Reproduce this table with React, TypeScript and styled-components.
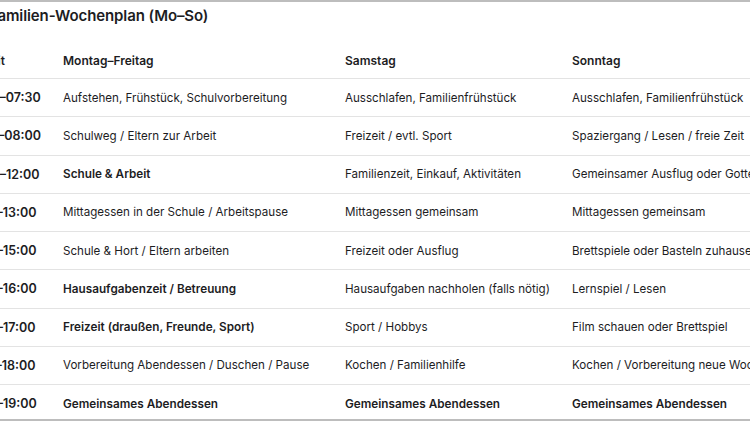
import styled, { createGlobalStyle } from "styled-components";

const GlobalStyle = createGlobalStyle`
  html, body {
    margin: 0;
    padding: 0;
    background: #ffffff;
    overflow: hidden;
  }
  body {
    font-family: Inter, "Noto Sans", "Liberation Sans", sans-serif;
    color: #1d1d1f;
    -webkit-font-smoothing: antialiased;
  }
`;

const Frame = styled.div`
  box-sizing: border-box;
  width: 750px;
  height: 421px;
  overflow: hidden;
  border-top: 2px solid #bdbdbd;
  border-bottom: 2px solid #bdbdbd;
`;

const Sheet = styled.section`
  width: 960px;
  margin-left: -49px;
`;

const Title = styled.h2`
  margin: 0;
  padding: 4px 0 0 38px;
  font-size: 15px;
  line-height: 20px;
  font-weight: 600;
  letter-spacing: -0.1px;
`;

const Table = styled.table`
  margin-top: 16px;
  width: 100%;
  border-collapse: collapse;
  table-layout: fixed;
`;

const Col = styled.col<{ $w: number }>`
  width: ${p => p.$w}px;
`;

const HeadCell = styled.th`
  height: 36px;
  padding: 0 12px;
  text-align: left;
  font-size: 12px;
  font-weight: 600;
  border-bottom: 1px solid #e3e3e3;
  white-space: nowrap;
  overflow: hidden;
`;

const Row = styled.tr`
  height: 38.25px;
  border-bottom: 1px solid #e3e3e3;
  &:last-child {
    border-bottom: none;
  }
`;

const Cell = styled.td<{ $bold?: boolean }>`
  padding: 0 12px;
  font-size: ${p => (p.$bold ? "11.75px" : "11.6px")};
  font-weight: ${p => (p.$bold ? 600 : 400)};
  white-space: nowrap;
  overflow: hidden;
`;

const TimeCell = styled.td`
  padding: 0 12px;
  font-size: 12.5px;
  font-weight: 600;
  white-space: nowrap;
  overflow: hidden;
`;

interface Slot {
  time: string;
  week: string;
  sat: string;
  sun: string;
  bold?: boolean;
  weekBold?: boolean;
}

const slots: Slot[] = [
  { time: "06:30–07:30", week: "Aufstehen, Frühstück, Schulvorbereitung", sat: "Ausschlafen, Familienfrühstück", sun: "Ausschlafen, Familienfrühstück" },
  { time: "07:30–08:00", week: "Schulweg / Eltern zur Arbeit", sat: "Freizeit / evtl. Sport", sun: "Spaziergang / Lesen / freie Zeit" },
  { time: "08:00–12:00", week: "Schule & Arbeit", weekBold: true, sat: "Familienzeit, Einkauf, Aktivitäten", sun: "Gemeinsamer Ausflug oder Gottesdienst" },
  { time: "12:00–13:00", week: "Mittagessen in der Schule / Arbeitspause", sat: "Mittagessen gemeinsam", sun: "Mittagessen gemeinsam" },
  { time: "13:00–15:00", week: "Schule & Hort / Eltern arbeiten", sat: "Freizeit oder Ausflug", sun: "Brettspiele oder Basteln zuhause" },
  { time: "15:00–16:00", week: "Hausaufgabenzeit / Betreuung", weekBold: true, sat: "Hausaufgaben nachholen (falls nötig)", sun: "Lernspiel / Lesen" },
  { time: "16:00–17:00", week: "Freizeit (draußen, Freunde, Sport)", weekBold: true, sat: "Sport / Hobbys", sun: "Film schauen oder Brettspiel" },
  { time: "17:00–18:00", week: "Vorbereitung Abendessen / Duschen / Pause", sat: "Kochen / Familienhilfe", sun: "Kochen / Vorbereitung neue Woche" },
  { time: "18:00–19:00", week: "Gemeinsames Abendessen", sat: "Gemeinsames Abendessen", sun: "Gemeinsames Abendessen", bold: true },
];

const App = () => {
  return (
    <>
      <GlobalStyle />
      <Frame>
        <Sheet>
          <Title>Familien-Wochenplan (Mo–So)</Title>
          <Table>
            <colgroup>
              <Col $w={100} />
              <Col $w={282} />
              <Col $w={227} />
              <Col $w={351} />
            </colgroup>
            <thead>
              <tr>
                <HeadCell>Uhrzeit</HeadCell>
                <HeadCell>Montag–Freitag</HeadCell>
                <HeadCell>Samstag</HeadCell>
                <HeadCell>Sonntag</HeadCell>
              </tr>
            </thead>
            <tbody>
              {slots.map(s => (
                <Row key={s.time}>
                  <TimeCell>{s.time}</TimeCell>
                  <Cell $bold={s.bold || s.weekBold}>{s.week}</Cell>
                  <Cell $bold={s.bold}>{s.sat}</Cell>
                  <Cell $bold={s.bold}>{s.sun}</Cell>
                </Row>
              ))}
            </tbody>
          </Table>
        </Sheet>
      </Frame>
    </>
  );
};

export default App;
